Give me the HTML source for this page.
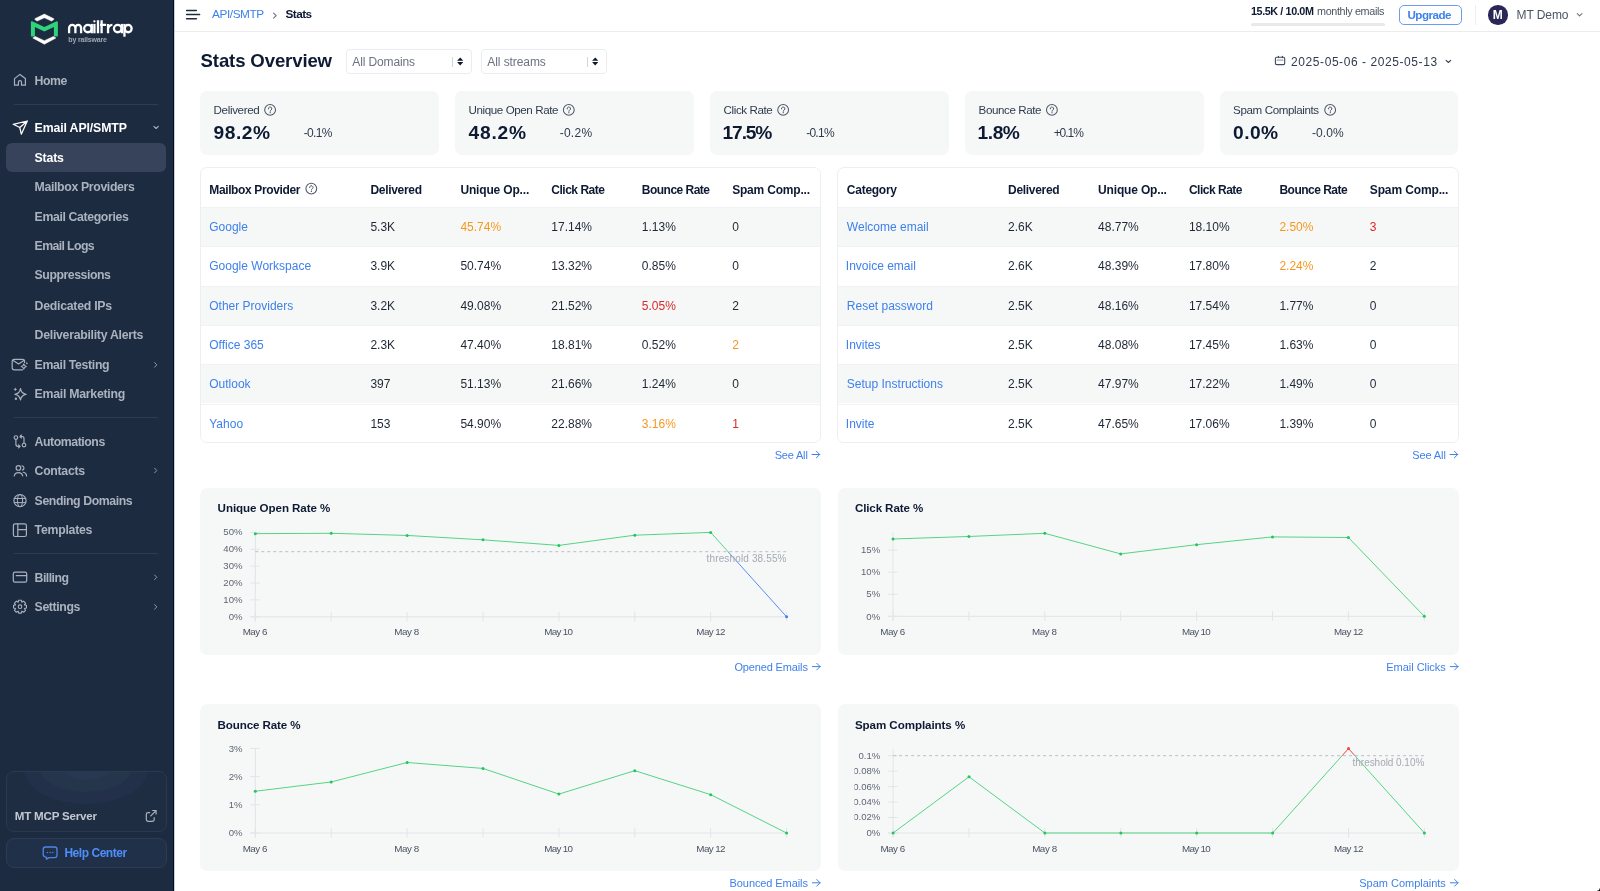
<!DOCTYPE html>
<html><head><meta charset="utf-8"><style>
html,body{margin:0;padding:0;width:1600px;height:891px;overflow:hidden;background:#fff;font-family:"Liberation Sans", sans-serif;}
.r{position:absolute;box-sizing:content-box;}
.t{position:absolute;white-space:nowrap;line-height:1;font-family:"Liberation Sans", sans-serif;}
</style></head><body>
<div class="r" style="left:0px;top:0px;width:173px;height:891px;background:#1d2b41;"></div><div class="r" style="left:173px;top:0px;width:1px;height:891px;background:#030b2b;"></div><div class="r" style="left:174px;top:0px;width:1px;height:891px;background:#c9ced2;"></div><div class="r" style="left:5.5px;top:142.9px;width:160.5px;height:28.9px;background:#36435a;border-radius:6px;"></div><div class="r" style="left:14px;top:104.0px;width:144px;height:1px;background:#2f3d53;"></div><div class="r" style="left:14px;top:417.0px;width:144px;height:1px;background:#2f3d53;"></div><div class="r" style="left:14px;top:552.7px;width:144px;height:1px;background:#2f3d53;"></div><div class="r" style="left:5.5px;top:771px;width:159.5px;height:58.5px;border:1px solid #2b394f;border-radius:8px;background:#1f2d43;overflow:hidden;"><div class="r" style="left:17px;top:-38px;width:124px;height:70px;border-radius:50%;background:#223149;"></div><div class="r" style="left:33px;top:-28px;width:92px;height:48px;border-radius:50%;background:#25354c;"></div><div class="r" style="left:55px;top:-20px;width:50px;height:28px;border-radius:50%;background:#283850;"></div></div><div class="r" style="left:5.5px;top:838.3px;width:159.5px;height:28.2px;border:1px solid #2d3c53;border-radius:8px;background:#203048;"></div><div class="r" style="left:1597px;top:888px;width:3px;height:3px;background:radial-gradient(circle at 0 0, rgba(0,0,0,0) 2.2px, #000 3.2px);"></div><div class="r" style="left:175px;top:31px;width:1425px;height:1px;background:#ececec;"></div><div class="r" style="left:1251px;top:23px;width:134px;height:2.75px;background:#e9e9e9;border-radius:2px;"></div><div class="r" style="left:1399px;top:4.6px;width:60.5px;height:18px;border:1px solid #6b9cf2;border-radius:5px;"></div><div class="r" style="left:1474.5px;top:5px;width:1px;height:20px;background:#eeeeee;"></div><div class="r" style="left:1488px;top:5px;width:19.5px;height:19.5px;border-radius:50%;background:#2a2757;"></div><div class="r" style="left:345.5px;top:48.5px;width:124.5px;height:23.5px;border:1px solid #eaecef;border-radius:4px;background:#fff;"></div><div class="r" style="left:451.5px;top:57px;width:1px;height:10px;background:#d1d5db;"></div><div class="r" style="left:480.5px;top:48.5px;width:124.5px;height:23.5px;border:1px solid #eaecef;border-radius:4px;background:#fff;"></div><div class="r" style="left:586.5px;top:57px;width:1px;height:10px;background:#d1d5db;"></div><div class="r" style="left:200px;top:91px;width:238.5px;height:63.5px;background:#f6f8f8;border-radius:7px;"></div><div class="r" style="left:455px;top:91px;width:238.5px;height:63.5px;background:#f6f8f8;border-radius:7px;"></div><div class="r" style="left:710px;top:91px;width:238.5px;height:63.5px;background:#f6f8f8;border-radius:7px;"></div><div class="r" style="left:965px;top:91px;width:238.5px;height:63.5px;background:#f6f8f8;border-radius:7px;"></div><div class="r" style="left:1219.5px;top:91px;width:238.5px;height:63.5px;background:#f6f8f8;border-radius:7px;"></div><div class="r" style="left:200px;top:167px;width:618.8px;height:273.5px;border:1px solid #eceff2;border-radius:7px;background:#fff;overflow:hidden;"><div class="r" style="left:0;top:39.00px;width:100%;height:39.3px;background:#f6f8f8;border-top:1px solid #f0f2f3;box-sizing:border-box;"></div><div class="r" style="left:0;top:78.30px;width:100%;height:39.3px;background:#fff;border-top:1px solid #f0f2f3;box-sizing:border-box;"></div><div class="r" style="left:0;top:117.60px;width:100%;height:39.3px;background:#f6f8f8;border-top:1px solid #f0f2f3;box-sizing:border-box;"></div><div class="r" style="left:0;top:156.90px;width:100%;height:39.3px;background:#fff;border-top:1px solid #f0f2f3;box-sizing:border-box;"></div><div class="r" style="left:0;top:196.20px;width:100%;height:39.3px;background:#f6f8f8;border-top:1px solid #f0f2f3;box-sizing:border-box;"></div><div class="r" style="left:0;top:235.50px;width:100%;height:39.3px;background:#fff;border-top:1px solid #f0f2f3;box-sizing:border-box;"></div></div><div class="r" style="left:837px;top:167px;width:619.6px;height:273.5px;border:1px solid #eceff2;border-radius:7px;background:#fff;overflow:hidden;"><div class="r" style="left:0;top:39.00px;width:100%;height:39.3px;background:#f6f8f8;border-top:1px solid #f0f2f3;box-sizing:border-box;"></div><div class="r" style="left:0;top:78.30px;width:100%;height:39.3px;background:#fff;border-top:1px solid #f0f2f3;box-sizing:border-box;"></div><div class="r" style="left:0;top:117.60px;width:100%;height:39.3px;background:#f6f8f8;border-top:1px solid #f0f2f3;box-sizing:border-box;"></div><div class="r" style="left:0;top:156.90px;width:100%;height:39.3px;background:#fff;border-top:1px solid #f0f2f3;box-sizing:border-box;"></div><div class="r" style="left:0;top:196.20px;width:100%;height:39.3px;background:#f6f8f8;border-top:1px solid #f0f2f3;box-sizing:border-box;"></div><div class="r" style="left:0;top:235.50px;width:100%;height:39.3px;background:#fff;border-top:1px solid #f0f2f3;box-sizing:border-box;"></div></div><div class="r" style="left:200.2px;top:488px;width:620.5px;height:167px;background:#f6f8f8;border-radius:7px;"></div><svg class="r" style="left:0;top:0" width="1600" height="891" viewBox="0 0 1600 891"><line x1="255.3" y1="532.4" x2="255.3" y2="621.3" stroke="#e2e4e8" stroke-width="1"/><line x1="250.3" y1="616.8" x2="786.6000000000001" y2="616.8" stroke="#e2e4e8" stroke-width="1"/><line x1="255.3" y1="611.8" x2="255.3" y2="621.3" stroke="#e2e4e8" stroke-width="1"/><line x1="331.20000000000005" y1="611.8" x2="331.20000000000005" y2="621.3" stroke="#e2e4e8" stroke-width="1"/><line x1="407.1" y1="611.8" x2="407.1" y2="621.3" stroke="#e2e4e8" stroke-width="1"/><line x1="483.0" y1="611.8" x2="483.0" y2="621.3" stroke="#e2e4e8" stroke-width="1"/><line x1="558.9000000000001" y1="611.8" x2="558.9000000000001" y2="621.3" stroke="#e2e4e8" stroke-width="1"/><line x1="634.8" y1="611.8" x2="634.8" y2="621.3" stroke="#e2e4e8" stroke-width="1"/><line x1="710.7" y1="611.8" x2="710.7" y2="621.3" stroke="#e2e4e8" stroke-width="1"/><line x1="786.6000000000001" y1="611.8" x2="786.6000000000001" y2="621.3" stroke="#e2e4e8" stroke-width="1"/><line x1="250.3" y1="532.4" x2="259.8" y2="532.4" stroke="#e2e4e8" stroke-width="1"/><line x1="250.3" y1="549.3" x2="259.8" y2="549.3" stroke="#e2e4e8" stroke-width="1"/><line x1="250.3" y1="566.2" x2="259.8" y2="566.2" stroke="#e2e4e8" stroke-width="1"/><line x1="250.3" y1="583.0" x2="259.8" y2="583.0" stroke="#e2e4e8" stroke-width="1"/><line x1="250.3" y1="599.9" x2="259.8" y2="599.9" stroke="#e2e4e8" stroke-width="1"/><line x1="250.3" y1="616.8" x2="259.8" y2="616.8" stroke="#e2e4e8" stroke-width="1"/><line x1="255.3" y1="551.7" x2="786.6000000000001" y2="551.7" stroke="#b9bec6" stroke-width="1" stroke-dasharray="3 3"/><line x1="255.30" y1="533.65" x2="331.20" y2="533.29" stroke="#55d484" stroke-width="1.0"/><line x1="331.20" y1="533.29" x2="407.10" y2="535.44" stroke="#55d484" stroke-width="1.0"/><line x1="407.10" y1="535.44" x2="483.00" y2="539.83" stroke="#55d484" stroke-width="1.0"/><line x1="483.00" y1="539.83" x2="558.90" y2="545.40" stroke="#55d484" stroke-width="1.0"/><line x1="558.90" y1="545.40" x2="634.80" y2="535.20" stroke="#55d484" stroke-width="1.0"/><line x1="634.80" y1="535.20" x2="710.70" y2="532.40" stroke="#55d484" stroke-width="1.0"/><line x1="710.70" y1="532.40" x2="728.06" y2="551.70" stroke="#55d484" stroke-width="1.0"/><line x1="728.06" y1="551.70" x2="786.60" y2="616.80" stroke="#5b8def" stroke-width="1.0"/><circle cx="255.30" cy="533.65" r="1.5" fill="#22c55e"/><circle cx="331.20" cy="533.29" r="1.5" fill="#22c55e"/><circle cx="407.10" cy="535.44" r="1.5" fill="#22c55e"/><circle cx="483.00" cy="539.83" r="1.5" fill="#22c55e"/><circle cx="558.90" cy="545.40" r="1.5" fill="#22c55e"/><circle cx="634.80" cy="535.20" r="1.5" fill="#22c55e"/><circle cx="710.70" cy="532.40" r="1.5" fill="#22c55e"/><circle cx="786.60" cy="616.80" r="1.5" fill="#3b82f6"/></svg><div class="r" style="left:837.5px;top:488px;width:621.3px;height:167px;background:#f6f8f8;border-radius:7px;"></div><svg class="r" style="left:0;top:0" width="1600" height="891" viewBox="0 0 1600 891"><line x1="893" y1="532" x2="893" y2="620.8" stroke="#e2e4e8" stroke-width="1"/><line x1="888" y1="616.3" x2="1424.3000000000002" y2="616.3" stroke="#e2e4e8" stroke-width="1"/><line x1="893.0" y1="611.3" x2="893.0" y2="620.8" stroke="#e2e4e8" stroke-width="1"/><line x1="968.9" y1="611.3" x2="968.9" y2="620.8" stroke="#e2e4e8" stroke-width="1"/><line x1="1044.8" y1="611.3" x2="1044.8" y2="620.8" stroke="#e2e4e8" stroke-width="1"/><line x1="1120.7" y1="611.3" x2="1120.7" y2="620.8" stroke="#e2e4e8" stroke-width="1"/><line x1="1196.6" y1="611.3" x2="1196.6" y2="620.8" stroke="#e2e4e8" stroke-width="1"/><line x1="1272.5" y1="611.3" x2="1272.5" y2="620.8" stroke="#e2e4e8" stroke-width="1"/><line x1="1348.4" y1="611.3" x2="1348.4" y2="620.8" stroke="#e2e4e8" stroke-width="1"/><line x1="1424.3000000000002" y1="611.3" x2="1424.3000000000002" y2="620.8" stroke="#e2e4e8" stroke-width="1"/><line x1="888" y1="550.15" x2="897.5" y2="550.15" stroke="#e2e4e8" stroke-width="1"/><line x1="888" y1="572.2" x2="897.5" y2="572.2" stroke="#e2e4e8" stroke-width="1"/><line x1="888" y1="594.25" x2="897.5" y2="594.25" stroke="#e2e4e8" stroke-width="1"/><line x1="888" y1="616.3" x2="897.5" y2="616.3" stroke="#e2e4e8" stroke-width="1"/><line x1="893.00" y1="538.99" x2="968.90" y2="536.48" stroke="#55d484" stroke-width="1.0"/><line x1="968.90" y1="536.48" x2="1044.80" y2="533.30" stroke="#55d484" stroke-width="1.0"/><line x1="1044.80" y1="533.30" x2="1120.70" y2="553.90" stroke="#55d484" stroke-width="1.0"/><line x1="1120.70" y1="553.90" x2="1196.60" y2="544.68" stroke="#55d484" stroke-width="1.0"/><line x1="1196.60" y1="544.68" x2="1272.50" y2="536.92" stroke="#55d484" stroke-width="1.0"/><line x1="1272.50" y1="536.92" x2="1348.40" y2="537.49" stroke="#55d484" stroke-width="1.0"/><line x1="1348.40" y1="537.49" x2="1424.30" y2="616.30" stroke="#55d484" stroke-width="1.0"/><circle cx="893.00" cy="538.99" r="1.5" fill="#22c55e"/><circle cx="968.90" cy="536.48" r="1.5" fill="#22c55e"/><circle cx="1044.80" cy="533.30" r="1.5" fill="#22c55e"/><circle cx="1120.70" cy="553.90" r="1.5" fill="#22c55e"/><circle cx="1196.60" cy="544.68" r="1.5" fill="#22c55e"/><circle cx="1272.50" cy="536.92" r="1.5" fill="#22c55e"/><circle cx="1348.40" cy="537.49" r="1.5" fill="#22c55e"/><circle cx="1424.30" cy="616.30" r="1.5" fill="#22c55e"/></svg><div class="r" style="left:200.2px;top:704.2px;width:620.5px;height:167px;background:#f6f8f8;border-radius:7px;"></div><svg class="r" style="left:0;top:0" width="1600" height="891" viewBox="0 0 1600 891"><line x1="255.3" y1="748.4" x2="255.3" y2="837.5" stroke="#e2e4e8" stroke-width="1"/><line x1="250.3" y1="833" x2="786.6000000000001" y2="833" stroke="#e2e4e8" stroke-width="1"/><line x1="255.3" y1="828" x2="255.3" y2="837.5" stroke="#e2e4e8" stroke-width="1"/><line x1="331.20000000000005" y1="828" x2="331.20000000000005" y2="837.5" stroke="#e2e4e8" stroke-width="1"/><line x1="407.1" y1="828" x2="407.1" y2="837.5" stroke="#e2e4e8" stroke-width="1"/><line x1="483.0" y1="828" x2="483.0" y2="837.5" stroke="#e2e4e8" stroke-width="1"/><line x1="558.9000000000001" y1="828" x2="558.9000000000001" y2="837.5" stroke="#e2e4e8" stroke-width="1"/><line x1="634.8" y1="828" x2="634.8" y2="837.5" stroke="#e2e4e8" stroke-width="1"/><line x1="710.7" y1="828" x2="710.7" y2="837.5" stroke="#e2e4e8" stroke-width="1"/><line x1="786.6000000000001" y1="828" x2="786.6000000000001" y2="837.5" stroke="#e2e4e8" stroke-width="1"/><line x1="250.3" y1="748.4" x2="259.8" y2="748.4" stroke="#e2e4e8" stroke-width="1"/><line x1="250.3" y1="776.6" x2="259.8" y2="776.6" stroke="#e2e4e8" stroke-width="1"/><line x1="250.3" y1="804.8" x2="259.8" y2="804.8" stroke="#e2e4e8" stroke-width="1"/><line x1="250.3" y1="833" x2="259.8" y2="833" stroke="#e2e4e8" stroke-width="1"/><line x1="255.30" y1="791.26" x2="331.20" y2="781.96" stroke="#55d484" stroke-width="1.0"/><line x1="331.20" y1="781.96" x2="407.10" y2="762.50" stroke="#55d484" stroke-width="1.0"/><line x1="407.10" y1="762.50" x2="483.00" y2="768.42" stroke="#55d484" stroke-width="1.0"/><line x1="483.00" y1="768.42" x2="558.90" y2="794.08" stroke="#55d484" stroke-width="1.0"/><line x1="558.90" y1="794.08" x2="634.80" y2="770.68" stroke="#55d484" stroke-width="1.0"/><line x1="634.80" y1="770.68" x2="710.70" y2="794.65" stroke="#55d484" stroke-width="1.0"/><line x1="710.70" y1="794.65" x2="786.60" y2="833.00" stroke="#55d484" stroke-width="1.0"/><circle cx="255.30" cy="791.26" r="1.5" fill="#22c55e"/><circle cx="331.20" cy="781.96" r="1.5" fill="#22c55e"/><circle cx="407.10" cy="762.50" r="1.5" fill="#22c55e"/><circle cx="483.00" cy="768.42" r="1.5" fill="#22c55e"/><circle cx="558.90" cy="794.08" r="1.5" fill="#22c55e"/><circle cx="634.80" cy="770.68" r="1.5" fill="#22c55e"/><circle cx="710.70" cy="794.65" r="1.5" fill="#22c55e"/><circle cx="786.60" cy="833.00" r="1.5" fill="#22c55e"/></svg><div class="r" style="left:837.5px;top:704.2px;width:621.3px;height:167px;background:#f6f8f8;border-radius:7px;"></div><svg class="r" style="left:0;top:0" width="1600" height="891" viewBox="0 0 1600 891"><line x1="893.1" y1="748.9" x2="893.1" y2="837.5" stroke="#e2e4e8" stroke-width="1"/><line x1="888.1" y1="833" x2="1424.4" y2="833" stroke="#e2e4e8" stroke-width="1"/><line x1="893.1" y1="828" x2="893.1" y2="837.5" stroke="#e2e4e8" stroke-width="1"/><line x1="969.0" y1="828" x2="969.0" y2="837.5" stroke="#e2e4e8" stroke-width="1"/><line x1="1044.9" y1="828" x2="1044.9" y2="837.5" stroke="#e2e4e8" stroke-width="1"/><line x1="1120.8" y1="828" x2="1120.8" y2="837.5" stroke="#e2e4e8" stroke-width="1"/><line x1="1196.7" y1="828" x2="1196.7" y2="837.5" stroke="#e2e4e8" stroke-width="1"/><line x1="1272.6" y1="828" x2="1272.6" y2="837.5" stroke="#e2e4e8" stroke-width="1"/><line x1="1348.5" y1="828" x2="1348.5" y2="837.5" stroke="#e2e4e8" stroke-width="1"/><line x1="1424.4" y1="828" x2="1424.4" y2="837.5" stroke="#e2e4e8" stroke-width="1"/><line x1="888.1" y1="755.6" x2="897.6" y2="755.6" stroke="#e2e4e8" stroke-width="1"/><line x1="888.1" y1="771.1" x2="897.6" y2="771.1" stroke="#e2e4e8" stroke-width="1"/><line x1="888.1" y1="786.6" x2="897.6" y2="786.6" stroke="#e2e4e8" stroke-width="1"/><line x1="888.1" y1="802.1" x2="897.6" y2="802.1" stroke="#e2e4e8" stroke-width="1"/><line x1="888.1" y1="817.5" x2="897.6" y2="817.5" stroke="#e2e4e8" stroke-width="1"/><line x1="888.1" y1="833" x2="897.6" y2="833" stroke="#e2e4e8" stroke-width="1"/><line x1="893.1" y1="755.7" x2="1424.4" y2="755.7" stroke="#b9bec6" stroke-width="1" stroke-dasharray="3 3"/><line x1="893.10" y1="833.00" x2="969.00" y2="776.81" stroke="#55d484" stroke-width="1.0"/><line x1="969.00" y1="776.81" x2="1044.90" y2="833.00" stroke="#55d484" stroke-width="1.0"/><line x1="1044.90" y1="833.00" x2="1120.80" y2="833.00" stroke="#55d484" stroke-width="1.0"/><line x1="1120.80" y1="833.00" x2="1196.70" y2="833.00" stroke="#55d484" stroke-width="1.0"/><line x1="1196.70" y1="833.00" x2="1272.60" y2="833.00" stroke="#55d484" stroke-width="1.0"/><line x1="1272.60" y1="833.00" x2="1342.12" y2="755.70" stroke="#55d484" stroke-width="1.0"/><line x1="1342.12" y1="755.70" x2="1348.50" y2="748.60" stroke="#ef4444" stroke-width="1.0"/><line x1="1348.50" y1="748.60" x2="1354.88" y2="755.70" stroke="#ef4444" stroke-width="1.0"/><line x1="1354.88" y1="755.70" x2="1424.40" y2="833.00" stroke="#55d484" stroke-width="1.0"/><circle cx="893.10" cy="833.00" r="1.5" fill="#22c55e"/><circle cx="969.00" cy="776.81" r="1.5" fill="#22c55e"/><circle cx="1044.90" cy="833.00" r="1.5" fill="#22c55e"/><circle cx="1120.80" cy="833.00" r="1.5" fill="#22c55e"/><circle cx="1196.70" cy="833.00" r="1.5" fill="#22c55e"/><circle cx="1272.60" cy="833.00" r="1.5" fill="#22c55e"/><circle cx="1348.50" cy="748.60" r="1.5" fill="#ef4444"/><circle cx="1424.40" cy="833.00" r="1.5" fill="#22c55e"/></svg>
<svg class="r" style="left:0;top:0" width="1600" height="891" viewBox="0 0 1600 891"><circle cx="270.10" cy="109.90" r="5.4" stroke="#4f5869" stroke-width="1.05" fill="none"/><path d="M268.45 108.90 A1.7 1.65 0 1 1 271.10 110.00 Q270.20 110.50 270.20 111.30" stroke="#4f5869" stroke-width="1.0" fill="none" stroke-linecap="round"/><circle cx="270.20" cy="112.70" r="0.65" fill="#4f5869"/><circle cx="568.80" cy="109.90" r="5.4" stroke="#4f5869" stroke-width="1.05" fill="none"/><path d="M567.15 108.90 A1.7 1.65 0 1 1 569.80 110.00 Q568.90 110.50 568.90 111.30" stroke="#4f5869" stroke-width="1.0" fill="none" stroke-linecap="round"/><circle cx="568.90" cy="112.70" r="0.65" fill="#4f5869"/><circle cx="783.15" cy="109.90" r="5.4" stroke="#4f5869" stroke-width="1.05" fill="none"/><path d="M781.50 108.90 A1.7 1.65 0 1 1 784.15 110.00 Q783.25 110.50 783.25 111.30" stroke="#4f5869" stroke-width="1.0" fill="none" stroke-linecap="round"/><circle cx="783.25" cy="112.70" r="0.65" fill="#4f5869"/><circle cx="1051.90" cy="109.90" r="5.4" stroke="#4f5869" stroke-width="1.05" fill="none"/><path d="M1050.25 108.90 A1.7 1.65 0 1 1 1052.90 110.00 Q1052.00 110.50 1052.00 111.30" stroke="#4f5869" stroke-width="1.0" fill="none" stroke-linecap="round"/><circle cx="1052.00" cy="112.70" r="0.65" fill="#4f5869"/><circle cx="1330.15" cy="109.90" r="5.4" stroke="#4f5869" stroke-width="1.05" fill="none"/><path d="M1328.50 108.90 A1.7 1.65 0 1 1 1331.15 110.00 Q1330.25 110.50 1330.25 111.30" stroke="#4f5869" stroke-width="1.0" fill="none" stroke-linecap="round"/><circle cx="1330.25" cy="112.70" r="0.65" fill="#4f5869"/><circle cx="311.30" cy="188.60" r="5.4" stroke="#4f5869" stroke-width="1.05" fill="none"/><path d="M309.65 187.60 A1.7 1.65 0 1 1 312.30 188.70 Q311.40 189.20 311.40 190.00" stroke="#4f5869" stroke-width="1.0" fill="none" stroke-linecap="round"/><circle cx="311.40" cy="191.40" r="0.65" fill="#4f5869"/><path d="M812 454.5 H819.7 M816.4 451.2 L819.7 454.5 L816.4 457.8" stroke="#3f80ea" stroke-width="1.0" fill="none" stroke-linecap="round" stroke-linejoin="round"/><path d="M1450 454.5 H1457.7 M1454.4 451.2 L1457.7 454.5 L1454.4 457.8" stroke="#3f80ea" stroke-width="1.0" fill="none" stroke-linecap="round" stroke-linejoin="round"/><path d="M812.4 666.6 H820.1 M816.8 663.3000000000001 L820.1 666.6 L816.8 669.9" stroke="#3f80ea" stroke-width="1.0" fill="none" stroke-linecap="round" stroke-linejoin="round"/><path d="M1450.3 666.6 H1458.0 M1454.7 663.3000000000001 L1458.0 666.6 L1454.7 669.9" stroke="#3f80ea" stroke-width="1.0" fill="none" stroke-linecap="round" stroke-linejoin="round"/><path d="M812.4 882.8000000000001 H820.1 M816.8 879.5000000000001 L820.1 882.8000000000001 L816.8 886.1" stroke="#3f80ea" stroke-width="1.0" fill="none" stroke-linecap="round" stroke-linejoin="round"/><path d="M1450.3 882.8000000000001 H1458.0 M1454.7 879.5000000000001 L1458.0 882.8000000000001 L1454.7 886.1" stroke="#3f80ea" stroke-width="1.0" fill="none" stroke-linecap="round" stroke-linejoin="round"/><path d="M34.9 18.7 L44.35 14.1 L53.8 18.7 L53.8 19.5 L51.6 21.1 L44.35 17.8 L37.1 21.1 L34.9 19.5 Z" fill="#ffffff" stroke="#ffffff" stroke-width="0.5" stroke-linejoin="round"/><path d="M30.9 36.4 V22.6 Q30.9 20.8 32.6 21.5 L44.35 27.0 L56.1 21.5 Q57.9 20.8 57.9 22.6 V36.4 H53.9 V26.9 L44.35 31.4 L34.9 26.9 V36.4 Z" fill="#2fd37a"/><path d="M32.8 38.0 L35.3 36.5 L44.35 40.7 L53.4 36.5 L55.9 38.0 L44.35 44.2 Z" fill="#ffffff" stroke="#ffffff" stroke-width="0.5" stroke-linejoin="round"/><path d="M186.6 10.5 H196.4 M186.6 14.6 H199.6 M186.6 18.8 H196.4" stroke="#1e2a3d" stroke-width="1.5" fill="none" stroke-linecap="round" stroke-linejoin="round"/><path d="M273.6 13.2 L276.2 15.7 L273.6 18.2" stroke="#6b7280" stroke-width="1.1" fill="none" stroke-linecap="round" stroke-linejoin="round"/><path d="M1577.3 13.6 L1579.6 15.8 L1581.9 13.6" stroke="#6b7280" stroke-width="1.1" fill="none" stroke-linecap="round" stroke-linejoin="round"/><path d="M1446.1 60.3 L1448.4 62.5 L1450.7 60.3" stroke="#374151" stroke-width="1.1" fill="none" stroke-linecap="round" stroke-linejoin="round"/><rect x="1275.4" y="57.3" width="9.3" height="7.3" rx="1.3" stroke="#3d4a63" stroke-width="1.1" fill="none" stroke-linecap="round" stroke-linejoin="round"/><path d="M1277.2 60.1 H1283.0" stroke="#9aa3b2" stroke-width="1.3" fill="none" stroke-linecap="round" stroke-linejoin="round"/><path d="M1278.4 56.2 V57.6 M1282.4 56.2 V57.6" stroke="#3d4a63" stroke-width="1.1" fill="none" stroke-linecap="round" stroke-linejoin="round"/><path d="M457.09999999999997 60.8 L460.2 57.4 L463.3 60.8 Z M457.09999999999997 62.1 L460.2 65.4 L463.3 62.1 Z" fill="#111827"/><path d="M592.1 60.8 L595.2 57.4 L598.3000000000001 60.8 Z M592.1 62.1 L595.2 65.4 L598.3000000000001 62.1 Z" fill="#111827"/><path d="M14.5 85.2 V78.6 L19.9 74.4 L25.4 78.6 V85.2 H21.5 V82.2 A1.55 1.55 0 0 0 18.4 82.2 V85.2 Z" stroke="#a9b1bd" stroke-width="1.2" fill="none" stroke-linecap="round" stroke-linejoin="round"/><path d="M13.2 124.3 L27.3 121.0 L21.3 134.2 L19.8 127.5 Z M19.8 127.5 L27.3 121.0" stroke="#ffffff" stroke-width="1.25" fill="none" stroke-linecap="round" stroke-linejoin="round"/><path d="M153.9 126.3 L156.1 128.5 L158.3 126.3" stroke="#aab2be" stroke-width="1.1" fill="none" stroke-linecap="round" stroke-linejoin="round"/><path d="M154.6 362.59999999999997 L156.8 364.9 L154.6 367.2" stroke="#8e97a5" stroke-width="1.0" fill="none" stroke-linecap="round" stroke-linejoin="round"/><path d="M154.6 468.2 L156.8 470.5 L154.6 472.8" stroke="#8e97a5" stroke-width="1.0" fill="none" stroke-linecap="round" stroke-linejoin="round"/><path d="M154.6 575.0 L156.8 577.3 L154.6 579.5999999999999" stroke="#8e97a5" stroke-width="1.0" fill="none" stroke-linecap="round" stroke-linejoin="round"/><path d="M154.6 604.6 L156.8 606.9 L154.6 609.1999999999999" stroke="#8e97a5" stroke-width="1.0" fill="none" stroke-linecap="round" stroke-linejoin="round"/><path d="M22.5 369.8 H14.2 Q12.2 369.8 12.2 367.8 V361.3 Q12.2 359.3 14.2 359.3 H22.6 Q24.6 359.3 24.6 361.3 V362.5" stroke="#a9b1bd" stroke-width="1.2" fill="none" stroke-linecap="round" stroke-linejoin="round"/><path d="M12.8 360.3 L18.6 363.9 L24.2 360.3" stroke="#a9b1bd" stroke-width="1.2" fill="none" stroke-linecap="round" stroke-linejoin="round"/><path d="M23.8 363.9 Q24.2 366.1 26.4 366.5 Q24.2 366.9 23.8 369.1 Q23.4 366.9 21.2 366.5 Q23.4 366.1 23.8 363.9 Z" stroke="#a9b1bd" stroke-width="1.1" fill="none" stroke-linecap="round" stroke-linejoin="round"/><circle cx="26.8" cy="363.3" r="0.9" fill="#a9b1bd"/><path d="M20.5 388.6 Q21.3 393.5 26.1 394.3 Q21.3 395.1 20.5 400.0 Q19.7 395.1 14.9 394.3 Q19.7 393.5 20.5 388.6 Z" stroke="#a9b1bd" stroke-width="1.2" fill="none" stroke-linecap="round" stroke-linejoin="round"/><path d="M15.3 387.4 Q15.6 389.0 17.2 389.3 Q15.6 389.6 15.3 391.2 Q15.0 389.6 13.4 389.3 Q15.0 389.0 15.3 387.4 Z" fill="#a9b1bd"/><circle cx="15.9" cy="398.7" r="1.2" fill="#a9b1bd"/><circle cx="15.9" cy="437.5" r="1.8" stroke="#a9b1bd" stroke-width="1.15" fill="none" stroke-linecap="round" stroke-linejoin="round"/><circle cx="24.0" cy="445.0" r="1.8" stroke="#a9b1bd" stroke-width="1.15" fill="none" stroke-linecap="round" stroke-linejoin="round"/><path d="M15.9 439.3 V444.3 Q15.9 446.3 17.9 446.3 H20.0 M18.6 444.8 L20.1 446.3 L18.6 447.8" stroke="#a9b1bd" stroke-width="1.15" fill="none" stroke-linecap="round" stroke-linejoin="round"/><path d="M24.0 443.2 V438.4 Q24.0 436.5 22.0 436.5 H20.1 M21.5 435.0 L20.0 436.5 L21.5 438.0" stroke="#a9b1bd" stroke-width="1.15" fill="none" stroke-linecap="round" stroke-linejoin="round"/><circle cx="18.4" cy="467.9" r="2.3" stroke="#a9b1bd" stroke-width="1.15" fill="none" stroke-linecap="round" stroke-linejoin="round"/><path d="M21.9 465.8 A2.2 2.2 0 0 1 22.4 470.1" stroke="#a9b1bd" stroke-width="1.15" fill="none" stroke-linecap="round" stroke-linejoin="round"/><path d="M14.2 476.0 A4.3 4.0 0 0 1 22.7 476.0" stroke="#a9b1bd" stroke-width="1.15" fill="none" stroke-linecap="round" stroke-linejoin="round"/><path d="M23.3 472.3 A4.0 3.9 0 0 1 26.6 476.0" stroke="#a9b1bd" stroke-width="1.15" fill="none" stroke-linecap="round" stroke-linejoin="round"/><circle cx="20.0" cy="500.6" r="6.1" stroke="#a9b1bd" stroke-width="1.15" fill="none" stroke-linecap="round" stroke-linejoin="round"/><path d="M14.2 498.5 H25.8 M14.2 502.6 H25.8" stroke="#a9b1bd" stroke-width="1.0" fill="none" stroke-linecap="round" stroke-linejoin="round"/><ellipse cx="20.0" cy="500.6" rx="2.6" ry="6.1" stroke="#a9b1bd" stroke-width="1.0" fill="none" stroke-linecap="round" stroke-linejoin="round"/><rect x="13.4" y="523.8" width="13.0" height="12.7" rx="1.8" stroke="#a9b1bd" stroke-width="1.2" fill="none" stroke-linecap="round" stroke-linejoin="round"/><path d="M17.8 523.8 V536.5 M17.8 529.6 H26.4" stroke="#a9b1bd" stroke-width="1.2" fill="none" stroke-linecap="round" stroke-linejoin="round"/><rect x="13.3" y="572.2" width="13.4" height="9.9" rx="1.6" stroke="#a9b1bd" stroke-width="1.2" fill="none" stroke-linecap="round" stroke-linejoin="round"/><path d="M16.3 575.7 H26.6" stroke="#a9b1bd" stroke-width="1.2" fill="none" stroke-linecap="round" stroke-linejoin="round"/><path d="M26.46 605.33 L26.46 608.07 L24.43 608.54 L25.54 610.29 L23.59 612.24 L21.84 611.13 L21.37 613.16 L18.63 613.16 L18.16 611.13 L16.41 612.24 L14.46 610.29 L15.57 608.54 L13.54 608.07 L13.54 605.33 L15.57 604.86 L14.46 603.11 L16.41 601.16 L18.16 602.27 L18.63 600.24 L21.37 600.24 L21.84 602.27 L23.59 601.16 L25.54 603.11 L24.43 604.86 Z" stroke="#a9b1bd" stroke-width="1.1" fill="none" stroke-linecap="round" stroke-linejoin="round"/><circle cx="20.0" cy="606.7" r="1.8" stroke="#a9b1bd" stroke-width="1.1" fill="none" stroke-linecap="round" stroke-linejoin="round"/><path d="M149.6 812.7 H148.0 Q146.3 812.7 146.3 814.4 V819.6 Q146.3 821.3 148.0 821.3 H152.5 Q154.2 821.3 154.2 819.6 V817.5" stroke="#a9b1bd" stroke-width="1.2" fill="none" stroke-linecap="round" stroke-linejoin="round"/><path d="M150.8 815.8 L156.0 810.6 M152.6 810.5 H156.1 V814.0" stroke="#a9b1bd" stroke-width="1.2" fill="none" stroke-linecap="round" stroke-linejoin="round"/><path d="M45.6 847.0 H54.6 Q57.0 847.0 57.0 849.4 V855.2 Q57.0 857.6 54.6 857.6 H49.2 L46.4 859.2 L46.6 857.4 Q43.2 857.0 43.2 854.6 V849.4 Q43.2 847.0 45.6 847.0 Z" stroke="#4d86e8" stroke-width="1.3" fill="none" stroke-linecap="round" stroke-linejoin="round"/><circle cx="47.4" cy="852.4" r="0.75" fill="#4d86e8"/><circle cx="50.1" cy="852.4" r="0.75" fill="#4d86e8"/><circle cx="52.8" cy="852.4" r="0.75" fill="#4d86e8"/><path d="M69.1 33.3 V28.1 A3.15 3.15 0 0 1 75.4 28.1 V33.3 M75.4 28.1 A2.85 3.15 0 0 1 81.1 28.1 V33.3" stroke="#ffffff" stroke-width="2.3" fill="none" stroke-linecap="butt"/><ellipse cx="87.9" cy="28.6" rx="3.75" ry="3.65" stroke="#ffffff" stroke-width="2.3" fill="none" stroke-linecap="butt"/><path d="M91.75 23.9 V33.3" stroke="#ffffff" stroke-width="2.3" fill="none" stroke-linecap="butt"/><path d="M94.4 23.9 V33.3" stroke="#ffffff" stroke-width="2.3" fill="none" stroke-linecap="butt"/><circle cx="94.4" cy="21.3" r="1.15" fill="#fff"/><path d="M98.0 20.3 V33.3 M101.6 20.3 V33.3 M100.0 24.8 H106.1" stroke="#ffffff" stroke-width="2.3" fill="none" stroke-linecap="butt"/><path d="M108.05 33.3 V23.9 M108.05 29.3 A4.3 4.3 0 0 1 112.4 24.95" stroke="#ffffff" stroke-width="2.3" fill="none" stroke-linecap="butt"/><ellipse cx="117.7" cy="28.6" rx="3.75" ry="3.65" stroke="#ffffff" stroke-width="2.3" fill="none" stroke-linecap="butt"/><path d="M121.95 23.9 V33.3" stroke="#ffffff" stroke-width="2.3" fill="none" stroke-linecap="butt"/><path d="M124.45 23.9 V36.7" stroke="#ffffff" stroke-width="2.3" fill="none" stroke-linecap="butt"/><ellipse cx="128.2" cy="28.6" rx="3.45" ry="3.65" stroke="#ffffff" stroke-width="2.3" fill="none" stroke-linecap="butt"/></svg>
<div class="r" style="left:0;top:0;width:1600px;height:891px;will-change:transform;">
<div class="t" style="left:34.60px;top:75.00px;font-size:12.3px;color:#aab2be;font-weight:700;letter-spacing:-0.475px">Home</div>
<div class="t" style="left:34.60px;top:122.00px;font-size:12.3px;color:#ffffff;font-weight:700;letter-spacing:-0.123px">Email API/SMTP</div>
<div class="t" style="left:34.60px;top:152.00px;font-size:12.3px;color:#ffffff;font-weight:700;letter-spacing:-0.183px">Stats</div>
<div class="t" style="left:34.60px;top:181.00px;font-size:12.3px;color:#aab2be;font-weight:700;letter-spacing:-0.355px">Mailbox Providers</div>
<div class="t" style="left:34.60px;top:211.00px;font-size:12.3px;color:#aab2be;font-weight:700;letter-spacing:-0.376px">Email Categories</div>
<div class="t" style="left:34.60px;top:240.00px;font-size:12.3px;color:#aab2be;font-weight:700;letter-spacing:-0.618px">Email Logs</div>
<div class="t" style="left:34.60px;top:269.00px;font-size:12.3px;color:#aab2be;font-weight:700;letter-spacing:-0.462px">Suppressions</div>
<div class="t" style="left:34.60px;top:300.00px;font-size:12.3px;color:#aab2be;font-weight:700;letter-spacing:-0.259px">Dedicated IPs</div>
<div class="t" style="left:34.60px;top:329.00px;font-size:12.3px;color:#aab2be;font-weight:700;letter-spacing:-0.279px">Deliverability Alerts</div>
<div class="t" style="left:34.60px;top:359.00px;font-size:12.3px;color:#aab2be;font-weight:700;letter-spacing:-0.335px">Email Testing</div>
<div class="t" style="left:34.60px;top:388.00px;font-size:12.3px;color:#aab2be;font-weight:700;letter-spacing:-0.264px">Email Marketing</div>
<div class="t" style="left:34.60px;top:436.00px;font-size:12.3px;color:#aab2be;font-weight:700;letter-spacing:-0.451px">Automations</div>
<div class="t" style="left:34.60px;top:465.00px;font-size:12.3px;color:#aab2be;font-weight:700;letter-spacing:-0.310px">Contacts</div>
<div class="t" style="left:34.60px;top:495.00px;font-size:12.3px;color:#aab2be;font-weight:700;letter-spacing:-0.415px">Sending Domains</div>
<div class="t" style="left:34.60px;top:524.00px;font-size:12.3px;color:#aab2be;font-weight:700;letter-spacing:-0.259px">Templates</div>
<div class="t" style="left:34.60px;top:572.00px;font-size:12.3px;color:#aab2be;font-weight:700;letter-spacing:-0.543px">Billing</div>
<div class="t" style="left:34.60px;top:601.00px;font-size:12.3px;color:#aab2be;font-weight:700;letter-spacing:-0.396px">Settings</div>
<div class="t" style="left:14.80px;top:810.00px;font-size:11.6px;color:#c2c8d0;font-weight:700;letter-spacing:-0.219px">MT MCP Server</div>
<div class="t" style="left:64.40px;top:847.00px;font-size:12px;color:#4f8ef7;font-weight:700;letter-spacing:-0.458px">Help Center</div>
<div class="t" style="left:212.00px;top:9.00px;font-size:11.8px;color:#3f80ea;letter-spacing:-0.413px">API/SMTP</div>
<div class="t" style="left:285.50px;top:9.00px;font-size:11.8px;color:#0e1a33;font-weight:700;letter-spacing:-0.572px">Stats</div>
<div class="t" style="left:1251.00px;top:6.00px;font-size:10.8px;color:#0e1a33;font-weight:700;letter-spacing:-0.410px">15.5K / 10.0M</div>
<div class="t" style="left:1317.00px;top:6.00px;font-size:10.8px;color:#4b5563;letter-spacing:-0.354px">monthly emails</div>
<div class="t" style="left:1407.50px;top:9.00px;font-size:11.6px;color:#3f80ea;font-weight:700;letter-spacing:-0.513px">Upgrade</div>
<div class="t" style="left:1492.75px;top:9.00px;font-size:12px;color:#ffffff;font-weight:700">M</div>
<div class="t" style="left:1516.60px;top:9.00px;font-size:12px;color:#4b5563;letter-spacing:-0.099px">MT Demo</div>
<div class="t" style="left:200.60px;top:52.00px;font-size:18.6px;color:#0e1a33;font-weight:700;letter-spacing:-0.143px">Stats Overview</div>
<div class="t" style="left:352.30px;top:56.00px;font-size:12px;color:#6b7280;letter-spacing:-0.132px">All Domains</div>
<div class="t" style="left:487.30px;top:56.00px;font-size:12px;color:#6b7280;letter-spacing:-0.084px">All streams</div>
<div class="t" style="left:1291.10px;top:56.00px;font-size:12px;color:#2f3b4f;letter-spacing:0.570px">2025-05-06 - 2025-05-13</div>
<div class="t" style="left:213.60px;top:104.00px;font-size:11.6px;color:#2f3a4c;letter-spacing:-0.353px">Delivered</div>
<div class="t" style="left:213.60px;top:123.00px;font-size:19.2px;color:#0e1a33;font-weight:700;letter-spacing:0.489px">98.2%</div>
<div class="t" style="left:303.70px;top:127.00px;font-size:12px;color:#2f3a4c;letter-spacing:-0.669px">-0.1%</div>
<div class="t" style="left:468.60px;top:104.00px;font-size:11.6px;color:#2f3a4c;letter-spacing:-0.412px">Unique Open Rate</div>
<div class="t" style="left:468.60px;top:123.00px;font-size:19.2px;color:#0e1a33;font-weight:700;letter-spacing:0.739px">48.2%</div>
<div class="t" style="left:559.70px;top:127.00px;font-size:12px;color:#2f3a4c;letter-spacing:0.256px">-0.2%</div>
<div class="t" style="left:723.60px;top:104.00px;font-size:11.6px;color:#2f3a4c;letter-spacing:-0.403px">Click Rate</div>
<div class="t" style="left:722.60px;top:123.00px;font-size:19.2px;color:#0e1a33;font-weight:700;letter-spacing:-1.149px">17.5%</div>
<div class="t" style="left:806.15px;top:127.00px;font-size:12px;color:#2f3a4c;letter-spacing:-0.732px">-0.1%</div>
<div class="t" style="left:978.60px;top:104.00px;font-size:11.6px;color:#2f3a4c;letter-spacing:-0.408px">Bounce Rate</div>
<div class="t" style="left:977.60px;top:123.00px;font-size:19.2px;color:#0e1a33;font-weight:700;letter-spacing:-0.474px">1.8%</div>
<div class="t" style="left:1053.65px;top:127.00px;font-size:12px;color:#2f3a4c;letter-spacing:-1.047px">+0.1%</div>
<div class="t" style="left:1233.10px;top:104.00px;font-size:11.6px;color:#2f3a4c;letter-spacing:-0.389px">Spam Complaints</div>
<div class="t" style="left:1233.10px;top:123.00px;font-size:19.2px;color:#0e1a33;font-weight:700;letter-spacing:0.442px">0.0%</div>
<div class="t" style="left:1311.90px;top:127.00px;font-size:12px;color:#2f3a4c;letter-spacing:0.081px">-0.0%</div>
<div class="t" style="left:209.25px;top:184.00px;font-size:12px;color:#0e1a33;font-weight:700;letter-spacing:-0.368px">Mailbox Provider</div>
<div class="t" style="left:370.45px;top:184.00px;font-size:12px;color:#0e1a33;font-weight:700;letter-spacing:-0.300px">Delivered</div>
<div class="t" style="left:460.45px;top:184.00px;font-size:12px;color:#0e1a33;font-weight:700;letter-spacing:-0.166px">Unique Op...</div>
<div class="t" style="left:551.35px;top:184.00px;font-size:12px;color:#0e1a33;font-weight:700;letter-spacing:-0.495px">Click Rate</div>
<div class="t" style="left:641.85px;top:184.00px;font-size:12px;color:#0e1a33;font-weight:700;letter-spacing:-0.517px">Bounce Rate</div>
<div class="t" style="left:732.15px;top:184.00px;font-size:12px;color:#0e1a33;font-weight:700;letter-spacing:-0.189px">Spam Comp...</div>
<div class="t" style="left:209.25px;top:221.00px;font-size:12px;color:#3f80ea">Google</div>
<div class="t" style="left:370.45px;top:221.00px;font-size:12px;color:#1f2735">5.3K</div>
<div class="t" style="left:460.45px;top:221.00px;font-size:12px;color:#f6981f">45.74%</div>
<div class="t" style="left:551.35px;top:221.00px;font-size:12px;color:#1f2735">17.14%</div>
<div class="t" style="left:641.85px;top:221.00px;font-size:12px;color:#1f2735">1.13%</div>
<div class="t" style="left:732.15px;top:221.00px;font-size:12px;color:#1f2735">0</div>
<div class="t" style="left:209.25px;top:260.00px;font-size:12px;color:#3f80ea">Google Workspace</div>
<div class="t" style="left:370.45px;top:260.00px;font-size:12px;color:#1f2735">3.9K</div>
<div class="t" style="left:460.45px;top:260.00px;font-size:12px;color:#1f2735">50.74%</div>
<div class="t" style="left:551.35px;top:260.00px;font-size:12px;color:#1f2735">13.32%</div>
<div class="t" style="left:641.85px;top:260.00px;font-size:12px;color:#1f2735">0.85%</div>
<div class="t" style="left:732.15px;top:260.00px;font-size:12px;color:#1f2735">0</div>
<div class="t" style="left:209.25px;top:300.00px;font-size:12px;color:#3f80ea">Other Providers</div>
<div class="t" style="left:370.45px;top:300.00px;font-size:12px;color:#1f2735">3.2K</div>
<div class="t" style="left:460.45px;top:300.00px;font-size:12px;color:#1f2735">49.08%</div>
<div class="t" style="left:551.35px;top:300.00px;font-size:12px;color:#1f2735">21.52%</div>
<div class="t" style="left:641.85px;top:300.00px;font-size:12px;color:#dc2828">5.05%</div>
<div class="t" style="left:732.15px;top:300.00px;font-size:12px;color:#1f2735">2</div>
<div class="t" style="left:209.25px;top:339.00px;font-size:12px;color:#3f80ea">Office 365</div>
<div class="t" style="left:370.45px;top:339.00px;font-size:12px;color:#1f2735">2.3K</div>
<div class="t" style="left:460.45px;top:339.00px;font-size:12px;color:#1f2735">47.40%</div>
<div class="t" style="left:551.35px;top:339.00px;font-size:12px;color:#1f2735">18.81%</div>
<div class="t" style="left:641.85px;top:339.00px;font-size:12px;color:#1f2735">0.52%</div>
<div class="t" style="left:732.15px;top:339.00px;font-size:12px;color:#f6981f">2</div>
<div class="t" style="left:209.25px;top:378.00px;font-size:12px;color:#3f80ea">Outlook</div>
<div class="t" style="left:370.45px;top:378.00px;font-size:12px;color:#1f2735">397</div>
<div class="t" style="left:460.45px;top:378.00px;font-size:12px;color:#1f2735">51.13%</div>
<div class="t" style="left:551.35px;top:378.00px;font-size:12px;color:#1f2735">21.66%</div>
<div class="t" style="left:641.85px;top:378.00px;font-size:12px;color:#1f2735">1.24%</div>
<div class="t" style="left:732.15px;top:378.00px;font-size:12px;color:#1f2735">0</div>
<div class="t" style="left:209.25px;top:418.00px;font-size:12px;color:#3f80ea">Yahoo</div>
<div class="t" style="left:370.45px;top:418.00px;font-size:12px;color:#1f2735">153</div>
<div class="t" style="left:460.45px;top:418.00px;font-size:12px;color:#1f2735">54.90%</div>
<div class="t" style="left:551.35px;top:418.00px;font-size:12px;color:#1f2735">22.88%</div>
<div class="t" style="left:641.85px;top:418.00px;font-size:12px;color:#f6981f">3.16%</div>
<div class="t" style="left:732.15px;top:418.00px;font-size:12px;color:#dc2828">1</div>
<div class="t" style="left:846.85px;top:184.00px;font-size:12px;color:#0e1a33;font-weight:700;letter-spacing:-0.263px">Category</div>
<div class="t" style="left:1008.05px;top:184.00px;font-size:12px;color:#0e1a33;font-weight:700;letter-spacing:-0.300px">Delivered</div>
<div class="t" style="left:1098.05px;top:184.00px;font-size:12px;color:#0e1a33;font-weight:700;letter-spacing:-0.166px">Unique Op...</div>
<div class="t" style="left:1188.95px;top:184.00px;font-size:12px;color:#0e1a33;font-weight:700;letter-spacing:-0.495px">Click Rate</div>
<div class="t" style="left:1279.45px;top:184.00px;font-size:12px;color:#0e1a33;font-weight:700;letter-spacing:-0.517px">Bounce Rate</div>
<div class="t" style="left:1369.75px;top:184.00px;font-size:12px;color:#0e1a33;font-weight:700;letter-spacing:-0.125px">Spam Comp...</div>
<div class="t" style="left:846.85px;top:221.00px;font-size:12px;color:#3f80ea">Welcome email</div>
<div class="t" style="left:1008.05px;top:221.00px;font-size:12px;color:#1f2735">2.6K</div>
<div class="t" style="left:1098.05px;top:221.00px;font-size:12px;color:#1f2735">48.77%</div>
<div class="t" style="left:1188.95px;top:221.00px;font-size:12px;color:#1f2735">18.10%</div>
<div class="t" style="left:1279.45px;top:221.00px;font-size:12px;color:#f6981f">2.50%</div>
<div class="t" style="left:1369.75px;top:221.00px;font-size:12px;color:#dc2828">3</div>
<div class="t" style="left:845.85px;top:260.00px;font-size:12px;color:#3f80ea">Invoice email</div>
<div class="t" style="left:1008.05px;top:260.00px;font-size:12px;color:#1f2735">2.6K</div>
<div class="t" style="left:1098.05px;top:260.00px;font-size:12px;color:#1f2735">48.39%</div>
<div class="t" style="left:1188.95px;top:260.00px;font-size:12px;color:#1f2735">17.80%</div>
<div class="t" style="left:1279.45px;top:260.00px;font-size:12px;color:#f6981f">2.24%</div>
<div class="t" style="left:1369.75px;top:260.00px;font-size:12px;color:#1f2735">2</div>
<div class="t" style="left:846.85px;top:300.00px;font-size:12px;color:#3f80ea">Reset password</div>
<div class="t" style="left:1008.05px;top:300.00px;font-size:12px;color:#1f2735">2.5K</div>
<div class="t" style="left:1098.05px;top:300.00px;font-size:12px;color:#1f2735">48.16%</div>
<div class="t" style="left:1188.95px;top:300.00px;font-size:12px;color:#1f2735">17.54%</div>
<div class="t" style="left:1279.45px;top:300.00px;font-size:12px;color:#1f2735">1.77%</div>
<div class="t" style="left:1369.75px;top:300.00px;font-size:12px;color:#1f2735">0</div>
<div class="t" style="left:845.85px;top:339.00px;font-size:12px;color:#3f80ea">Invites</div>
<div class="t" style="left:1008.05px;top:339.00px;font-size:12px;color:#1f2735">2.5K</div>
<div class="t" style="left:1098.05px;top:339.00px;font-size:12px;color:#1f2735">48.08%</div>
<div class="t" style="left:1188.95px;top:339.00px;font-size:12px;color:#1f2735">17.45%</div>
<div class="t" style="left:1279.45px;top:339.00px;font-size:12px;color:#1f2735">1.63%</div>
<div class="t" style="left:1369.75px;top:339.00px;font-size:12px;color:#1f2735">0</div>
<div class="t" style="left:846.85px;top:378.00px;font-size:12px;color:#3f80ea">Setup Instructions</div>
<div class="t" style="left:1008.05px;top:378.00px;font-size:12px;color:#1f2735">2.5K</div>
<div class="t" style="left:1098.05px;top:378.00px;font-size:12px;color:#1f2735">47.97%</div>
<div class="t" style="left:1188.95px;top:378.00px;font-size:12px;color:#1f2735">17.22%</div>
<div class="t" style="left:1279.45px;top:378.00px;font-size:12px;color:#1f2735">1.49%</div>
<div class="t" style="left:1369.75px;top:378.00px;font-size:12px;color:#1f2735">0</div>
<div class="t" style="left:845.85px;top:418.00px;font-size:12px;color:#3f80ea">Invite</div>
<div class="t" style="left:1008.05px;top:418.00px;font-size:12px;color:#1f2735">2.5K</div>
<div class="t" style="left:1098.05px;top:418.00px;font-size:12px;color:#1f2735">47.65%</div>
<div class="t" style="left:1188.95px;top:418.00px;font-size:12px;color:#1f2735">17.06%</div>
<div class="t" style="left:1279.45px;top:418.00px;font-size:12px;color:#1f2735">1.39%</div>
<div class="t" style="left:1369.75px;top:418.00px;font-size:12px;color:#1f2735">0</div>
<div class="t" style="left:774.70px;top:450.00px;font-size:11px;color:#3f80ea;letter-spacing:-0.185px">See All</div>
<div class="t" style="left:1412.20px;top:450.00px;font-size:11px;color:#3f80ea;letter-spacing:-0.102px">See All</div>
<div class="t" style="left:217.60px;top:502.00px;font-size:11.6px;color:#0e1a33;font-weight:700;letter-spacing:-0.077px">Unique Open Rate %</div>
<div class="t" style="left:223.33px;top:527.00px;font-size:9.6px;color:#5f6673">50%</div>
<div class="t" style="left:223.33px;top:544.00px;font-size:9.6px;color:#5f6673">40%</div>
<div class="t" style="left:223.33px;top:561.00px;font-size:9.6px;color:#5f6673">30%</div>
<div class="t" style="left:223.33px;top:578.00px;font-size:9.6px;color:#5f6673">20%</div>
<div class="t" style="left:223.33px;top:595.00px;font-size:9.6px;color:#5f6673">10%</div>
<div class="t" style="left:228.66px;top:612.00px;font-size:9.6px;color:#5f6673">0%</div>
<div class="t" style="left:242.65px;top:627.00px;font-size:9.8px;color:#4b5260;letter-spacing:-0.482px">May 6</div>
<div class="t" style="left:394.35px;top:627.00px;font-size:9.8px;color:#4b5260;letter-spacing:-0.432px">May 8</div>
<div class="t" style="left:544.30px;top:627.00px;font-size:9.8px;color:#4b5260;letter-spacing:-0.696px">May 10</div>
<div class="t" style="left:696.30px;top:627.00px;font-size:9.8px;color:#4b5260;letter-spacing:-0.576px">May 12</div>
<div class="t" style="left:706.60px;top:554.00px;font-size:10px;color:#a4aab3;letter-spacing:0.137px">threshold 38.55%</div>
<div class="t" style="left:734.40px;top:662.00px;font-size:11px;color:#3f80ea;letter-spacing:-0.142px">Opened Emails</div>
<div class="t" style="left:854.90px;top:502.00px;font-size:11.6px;color:#0e1a33;font-weight:700;letter-spacing:-0.117px">Click Rate %</div>
<div class="t" style="left:861.03px;top:545.00px;font-size:9.6px;color:#5f6673">15%</div>
<div class="t" style="left:861.03px;top:567.00px;font-size:9.6px;color:#5f6673">10%</div>
<div class="t" style="left:866.36px;top:589.00px;font-size:9.6px;color:#5f6673">5%</div>
<div class="t" style="left:866.36px;top:612.00px;font-size:9.6px;color:#5f6673">0%</div>
<div class="t" style="left:880.35px;top:627.00px;font-size:9.8px;color:#4b5260;letter-spacing:-0.482px">May 6</div>
<div class="t" style="left:1032.05px;top:627.00px;font-size:9.8px;color:#4b5260;letter-spacing:-0.432px">May 8</div>
<div class="t" style="left:1182.00px;top:627.00px;font-size:9.8px;color:#4b5260;letter-spacing:-0.696px">May 10</div>
<div class="t" style="left:1334.00px;top:627.00px;font-size:9.8px;color:#4b5260;letter-spacing:-0.576px">May 12</div>
<div class="t" style="left:1386.30px;top:662.00px;font-size:11px;color:#3f80ea;letter-spacing:-0.036px">Email Clicks</div>
<div class="t" style="left:217.60px;top:719.00px;font-size:11.6px;color:#0e1a33;font-weight:700;letter-spacing:-0.124px">Bounce Rate %</div>
<div class="t" style="left:228.66px;top:744.00px;font-size:9.6px;color:#5f6673">3%</div>
<div class="t" style="left:228.66px;top:772.00px;font-size:9.6px;color:#5f6673">2%</div>
<div class="t" style="left:228.66px;top:800.00px;font-size:9.6px;color:#5f6673">1%</div>
<div class="t" style="left:228.66px;top:828.00px;font-size:9.6px;color:#5f6673">0%</div>
<div class="t" style="left:242.65px;top:844.00px;font-size:9.8px;color:#4b5260;letter-spacing:-0.482px">May 6</div>
<div class="t" style="left:394.35px;top:844.00px;font-size:9.8px;color:#4b5260;letter-spacing:-0.432px">May 8</div>
<div class="t" style="left:544.30px;top:844.00px;font-size:9.8px;color:#4b5260;letter-spacing:-0.696px">May 10</div>
<div class="t" style="left:696.30px;top:844.00px;font-size:9.8px;color:#4b5260;letter-spacing:-0.576px">May 12</div>
<div class="t" style="left:729.60px;top:878.00px;font-size:11px;color:#3f80ea;letter-spacing:-0.091px">Bounced Emails</div>
<div class="t" style="left:854.90px;top:719.00px;font-size:11.6px;color:#0e1a33;font-weight:700;letter-spacing:-0.071px">Spam Complaints %</div>
<div class="t" style="left:858.46px;top:751.00px;font-size:9.6px;color:#5f6673">0.1%</div>
<div class="t" style="left:853.13px;top:766.00px;font-size:9.6px;color:#5f6673;clip-path:inset(-5px -5px -5px 1.37px)">0.08%</div>
<div class="t" style="left:853.13px;top:782.00px;font-size:9.6px;color:#5f6673;clip-path:inset(-5px -5px -5px 1.37px)">0.06%</div>
<div class="t" style="left:853.13px;top:797.00px;font-size:9.6px;color:#5f6673;clip-path:inset(-5px -5px -5px 1.37px)">0.04%</div>
<div class="t" style="left:853.13px;top:812.00px;font-size:9.6px;color:#5f6673;clip-path:inset(-5px -5px -5px 1.37px)">0.02%</div>
<div class="t" style="left:866.46px;top:828.00px;font-size:9.6px;color:#5f6673">0%</div>
<div class="t" style="left:880.45px;top:844.00px;font-size:9.8px;color:#4b5260;letter-spacing:-0.482px">May 6</div>
<div class="t" style="left:1032.15px;top:844.00px;font-size:9.8px;color:#4b5260;letter-spacing:-0.432px">May 8</div>
<div class="t" style="left:1182.10px;top:844.00px;font-size:9.8px;color:#4b5260;letter-spacing:-0.696px">May 10</div>
<div class="t" style="left:1334.10px;top:844.00px;font-size:9.8px;color:#4b5260;letter-spacing:-0.576px">May 12</div>
<div class="t" style="left:1352.60px;top:758.00px;font-size:10px;color:#a4aab3;letter-spacing:-0.041px">threshold 0.10%</div>
<div class="t" style="left:1359.30px;top:878.00px;font-size:11px;color:#3f80ea;letter-spacing:-0.022px">Spam Complaints</div>
<div class="t" style="left:68.30px;top:36.00px;font-size:7.0px;color:#9ea6b2;font-weight:700;letter-spacing:-0.161px">by railsware</div>
</div>
</body></html>
